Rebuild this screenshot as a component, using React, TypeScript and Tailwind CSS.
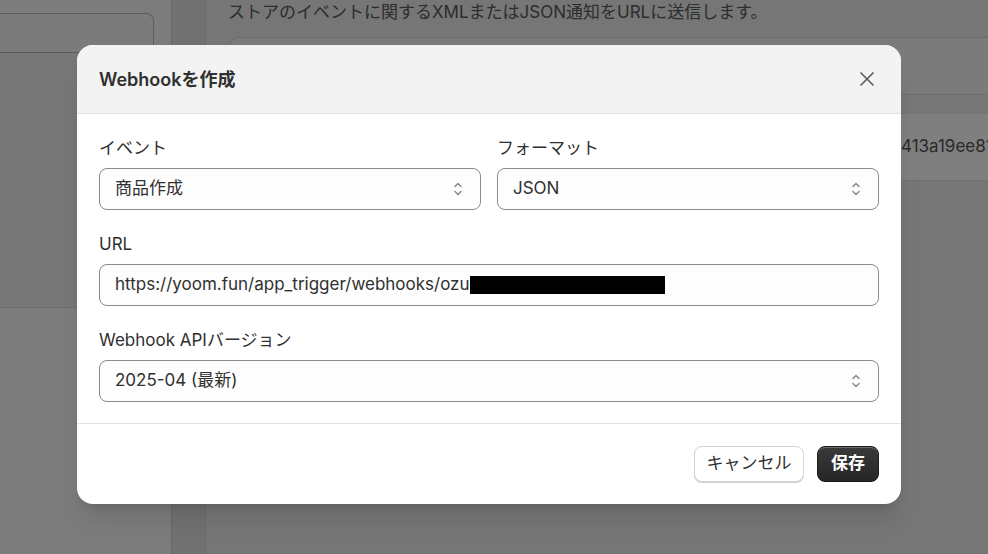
import React from 'react';

const SelectChevron: React.FC = () => (
  <svg width="12" height="18" viewBox="0 0 12 18" fill="none" stroke="#8a8a8a" strokeWidth="1.5" strokeLinecap="round" strokeLinejoin="round">
    <path d="M3 6.5 L6 3.5 L9 6.5" />
    <path d="M3 11.5 L6 14.5 L9 11.5" />
  </svg>
);

const CloseIcon: React.FC = () => (
  <svg width="16" height="16" viewBox="0 0 16 16" fill="none" stroke="#616161" strokeWidth="1.75" strokeLinecap="round">
    <path d="M2 2 L14 14" />
    <path d="M14 2 L2 14" />
  </svg>
);

const Field: React.FC<{ label: string; children: React.ReactNode; className?: string }> = ({ label, children, className }) => (
  <div className={className}>
    <label className="block text-[17px] leading-[20px] text-[#303030]">{label}</label>
    <div className="mt-[10px]">{children}</div>
  </div>
);

const SelectBox: React.FC<{ value: string }> = ({ value }) => (
  <div className="flex h-[42px] items-center justify-between rounded-lg border border-[#8a8a8a] bg-[#fdfdfd] pl-[15px] pr-[16px] text-[17px] text-[#303030]">
    <span>{value}</span>
    <SelectChevron />
  </div>
);

const App: React.FC = () => {
  return (
    <div
      className="relative h-[554px] w-[988px] overflow-hidden bg-[#e2e2e2]"
      style={{ fontFamily: 'Inter, "Noto Sans CJK JP", sans-serif' }}
    >
      {/* page behind the dialog */}
      <div className="flex h-full">
        <aside className="w-[172px] shrink-0 border-r border-[#d2d2d2] bg-[#f8f8f8] pt-[13px]">
          <div className="mr-[17px] h-[40px] rounded-tr-lg border-r border-t border-b border-[#b8b8b8] bg-[#f6f6f6]" />
          <div className="h-[255px] border-b border-[#dadada] bg-[#eeeeee]" />
        </aside>
        <main className="flex-1 pl-[33px]">
          <div className="h-full border-l border-[#d6d6d6] bg-[#ececec] pl-[22px] pt-[1px]">
            <p className="text-[17px] leading-[22px] text-[#5a5a5a]">
              ストアのイベントに関するXMLまたはJSON通知をURLに送信します。
            </p>
            <div className="mt-[14px] rounded-tl-xl border-l border-t border-[#d8d8d8] bg-[#f6f6f6]">
              <div className="h-[57px] border-b border-[#dcdcdc]" />
              <div className="h-[19px] bg-[#efefef]" />
              <div className="flex h-[67px] items-center border-b border-[#dedede] bg-white pl-[672px] text-[17px] text-[#555]">
                <span className="whitespace-nowrap">413a19ee81f</span>
              </div>
            </div>
          </div>
        </main>
      </div>

      {/* overlay + dialog */}
      <div className="absolute inset-0 bg-black/50 pl-[77px] pt-[45px]">
        <div className="w-[824px] overflow-hidden rounded-2xl bg-white shadow-xl">
          <div className="flex h-[69px] items-center justify-between border-b border-[#e3e3e3] bg-[#f3f3f3] pl-[22px] pr-[26px]">
            <h2 className="text-[18px] font-semibold text-[#303030]">Webhookを作成</h2>
            <CloseIcon />
          </div>

          <div className="px-[22px] pb-[21px] pt-[24px]">
            <div className="grid grid-cols-2 gap-4">
              <Field label="イベント">
                <SelectBox value="商品作成" />
              </Field>
              <Field label="フォーマット">
                <SelectBox value="JSON" />
              </Field>
            </div>

            <Field label="URL" className="mt-[24px]">
              <div className="flex h-[42px] items-center rounded-lg border border-[#8a8a8a] bg-[#fdfdfd] pl-[15px] text-[17px] text-[#303030]">
                <span>https://yoom.fun/app_trigger/webhooks/ozu</span>
                <span className="inline-block h-[18px] w-[195px] bg-black" />
              </div>
            </Field>

            <Field label="Webhook APIバージョン" className="mt-[24px]">
              <SelectBox value="2025-04 (最新)" />
            </Field>
          </div>

          <div className="flex h-[81px] items-center justify-end gap-[13px] border-t border-[#e3e3e3] px-[22px]">
            <button className="h-[36px] w-[110px] rounded-lg border border-[#d4d4d4] bg-white text-[17px] text-[#303030] shadow-[0_1px_0_#cfcfcf]">
              キャンセル
            </button>
            <button className="h-[36px] w-[62px] rounded-lg border border-[#1a1a1a] bg-gradient-to-b from-[#3a3a3a] to-[#262626] text-[17px] font-semibold text-white shadow-[inset_0_1px_0_rgba(255,255,255,0.25)]">
              保存
            </button>
          </div>
        </div>
      </div>
    </div>
  );
};

export default App;
